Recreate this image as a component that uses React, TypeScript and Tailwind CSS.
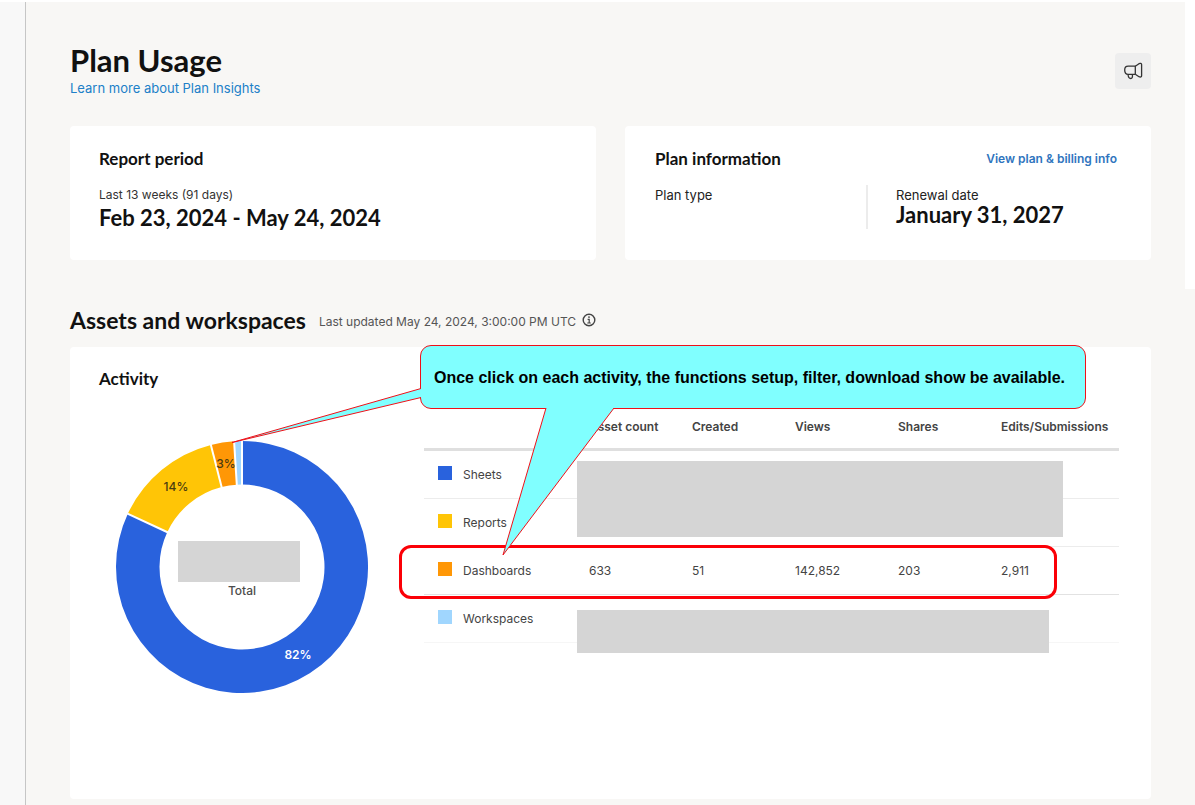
import React from "react";

type Slice = { label: string; color: string; start: number; end: number };

const slices: Slice[] = [
  { label: "Sheets", color: "#2962dd", start: 0, end: 295 },
  { label: "Reports", color: "#ffc506", start: 295, end: 345.7 },
  { label: "Dashboards", color: "#ff9706", start: 345.7, end: 356.4 },
  { label: "Workspaces", color: "#a0d6fe", start: 356.4, end: 360 },
];

const rows = [
  { name: "Sheets", swatch: "bg-[#2962dd]", line: "border-[#ececec]", values: ["", "", "", "", ""] },
  { name: "Reports", swatch: "bg-[#ffc506]", line: "border-[#ececec]", values: ["", "", "", "", ""] },
  { name: "Dashboards", swatch: "bg-[#ff9706]", line: "border-[#e2e2e2]", values: ["633", "51", "142,852", "203", "2,911"] },
  { name: "Workspaces", swatch: "bg-[#a0d6fe]", line: "border-[#f6f6f6]", values: ["", "", "", "", ""] },
];

const columns = ["Asset count", "Created", "Views", "Shares", "Edits/Submissions"];

function point(radius: number, degrees: number) {
  const a = ((degrees - 90) * Math.PI) / 180;
  return `${(126 + radius * Math.cos(a)).toFixed(2)} ${(126 + radius * Math.sin(a)).toFixed(2)}`;
}

function ring({ start, end }: Slice) {
  const large = end - start > 180 ? 1 : 0;
  return `M${point(126, start)}A126 126 0 ${large} 1 ${point(126, end)}L${point(82.5, end)}A82.5 82.5 0 ${large} 0 ${point(82.5, start)}Z`;
}

function Donut() {
  return (
    <div className="relative mt-[41px] ml-[17px] size-[252px] shrink-0">
      <svg viewBox="0 0 252 252" className="size-full" role="img" aria-label="Activity by asset type">
        {slices.map((s) => (
          <path key={s.label} d={ring(s)} fill={s.color} />
        ))}
        {slices.map((s) => (
          <path key={s.label} d={`M${point(81, s.start)}L${point(127, s.start)}`} stroke="#fff" strokeWidth="2" />
        ))}
        <g fontFamily="Inter, sans-serif" fontSize="12" fontWeight="500" textAnchor="middle" fill="#4a3c10">
          <text x="60" y="50">14%</text>
          <text x="110" y="27">3%</text>
          <text x="182" y="218" fill="#fff" fontWeight="600">82%</text>
        </g>
      </svg>
      <div className="absolute top-[100px] left-[62px] flex w-[122px] flex-col items-center">
        <div className="h-[41px] w-full bg-[#d5d5d5]" />
        <span className="pl-[6px] text-xs leading-[18px] font-medium text-[#4c4c4c]">Total</span>
      </div>
    </div>
  );
}

function ActivityTable() {
  return (
    <div className="relative ml-14 mr-8 flex-1">
      <table className="w-full table-fixed border-separate border-spacing-0 text-left text-xs text-[#444]">
        <colgroup>
          <col className="w-[153px]" />
          <col className="w-[103px]" />
          <col className="w-[103px]" />
          <col className="w-[103px]" />
          <col className="w-[103px]" />
          <col />
        </colgroup>
        <thead>
          <tr>
            <td className="border-b-3 border-[#dfdfdf]" />
            {columns.map((c) => (
              <th key={c} scope="col" className="border-b-3 border-[#dfdfdf] pt-[18px] pb-3 pl-3 leading-[18px] font-semibold">
                {c}
              </th>
            ))}
          </tr>
        </thead>
        <tbody>
          {rows.map((r) => (
            <tr key={r.name}>
              <th scope="row" className={`h-12 border-b pl-[14px] font-normal ${r.line}`}>
                <span className="flex items-center gap-[11px]">
                  <span className={`mb-1 size-[14px] ${r.swatch}`} />
                  {r.name}
                </span>
              </th>
              {r.values.map((v, i) => (
                <td key={i} className={`border-b pl-3 ${r.line}`}>
                  {v}
                </td>
              ))}
            </tr>
          ))}
        </tbody>
      </table>
      <div className="absolute top-[61px] left-[153px] h-[76px] w-[486px] bg-[#d5d5d5]" />
      <div className="absolute top-[210px] left-[153px] h-[43px] w-[472px] bg-[#d5d5d5]" />
      <div className="absolute top-[145px] -left-[25px] h-[54px] w-[658px] rounded-xl border-3 border-[#fb0007]" />
    </div>
  );
}

function Callout() {
  return (
    <div className="absolute -top-[2px] left-[350px] h-16 w-[666px]">
      <div className="flex h-full items-center rounded-[11px] border border-[#f01018] bg-[#80ffff] pt-[2px] pl-[13px] text-base font-bold whitespace-nowrap text-black [font-family:'Liberation_Sans',Arial,sans-serif]">
        Once click on each activity, the functions setup, filter, download show be available.
      </div>
      <svg width="400" height="220" viewBox="-190 0 400 220" className="pointer-events-none absolute top-0 -left-[190px]" aria-hidden="true">
        <g fill="#80ffff" stroke="#f01018" strokeWidth="1">
          <path d="M1 43.5L-188 97.5L1 52.5" />
          <path d="M126 63L83 210L194 63" />
        </g>
      </svg>
    </div>
  );
}

function Megaphone() {
  return (
    <svg width="20" height="20" viewBox="0 0 20 20" fill="none" stroke="#333" strokeWidth="1.3" strokeLinejoin="round" aria-hidden="true">
      <path d="M12.3 5.2H5.200C3 5.200 1.700 6.800 1.700 9s1.300 4.300 3.500 4.300h7.100z" />
      <path d="M12.300 5.200L16 2.700c1.400-.7 2.600-.3 2.600.9v11.200c0 1.200-1.200 1.600-2.600.9l-3.700-2.400" />
      <path d="M5 13.500c.3 2.500 1.200 4 2.700 4s2-1.300 1.700-3.900" />
    </svg>
  );
}

function InfoIcon() {
  return (
    <svg width="14" height="14" viewBox="0 0 14 14" fill="none" stroke="#444" aria-hidden="true">
      <circle cx="7" cy="7" r="5.800" strokeWidth="1.400" />
      <path d="M5.600 6.300H7.200V10M5.300 10H8.800" strokeWidth="1.200" />
      <circle cx="7" cy="4.100" r=".9" fill="#444" stroke="none" />
    </svg>
  );
}

const card = "rounded bg-white";
const display = "font-bold text-[#111] [font-family:Lato,sans-serif]";

export default function App() {
  return (
    <div className="relative flex min-h-screen border-t-2 border-white bg-[#f8f7f5] [font-family:Inter,sans-serif]">
      <aside className="w-[26px] shrink-0 border-r border-[#c6c6c6] bg-[#f8f8f8]" />
      <main className="min-w-0 flex-1 px-11 pt-[42px] pb-[6px]">
        <header className="flex items-start justify-between">
          <div>
            <h1 className={`text-[31px] leading-8 ${display}`}>Plan Usage</h1>
            <a href="#insights" className="mt-[2px] block text-[13px] leading-5 text-[#2080c8]">
              Learn more about Plan Insights
            </a>
          </div>
          <button type="button" aria-label="Announcements" className="mt-[9px] flex size-9 items-center justify-center rounded bg-[#eee]">
            <Megaphone />
          </button>
        </header>

        <div className="mt-7 grid grid-cols-2 gap-[29px]">
          <section className={`min-h-[134px] px-[29px] pt-[23px] ${card}`}>
            <h2 className={`text-[17px] leading-5 ${display}`}>Report period</h2>
            <p className="mt-[18px] text-xs leading-4 text-[#333]">Last 13 weeks (91 days)</p>
            <p className={`text-[22px] leading-[30px] ${display}`}>Feb 23, 2024 - May 24, 2024</p>
          </section>
          <section className={`min-h-[134px] pr-[34px] pl-[30px] pt-[23px] ${card}`}>
            <div className="flex items-center justify-between">
              <h2 className={`text-[17px] leading-5 ${display}`}>Plan information</h2>
              <a href="#billing" className="text-xs leading-5 font-semibold text-[#2f75be]">
                View plan &amp; billing info
              </a>
            </div>
            <div className="mt-4 flex h-11">
              <p className="w-[211px] pt-[2px] text-[13px] leading-4 text-[#222]">Plan type</p>
              <div className="border-l-2 border-[#ececec] pl-[28px]">
                <p className="pt-[2px] text-[13px] leading-4 text-[#222]">Renewal date</p>
                <p className={`text-[22px] leading-6 ${display}`}>January 31, 2027</p>
              </div>
            </div>
          </section>
        </div>

        <div className="mt-[46px] flex items-center">
          <h2 className={`text-[23px] leading-7 ${display}`}>Assets and workspaces</h2>
          <span className="ml-[13px] pt-1 text-xs text-[#555]">Last updated May 24, 2024, 3:00:00 PM UTC</span>
          <button type="button" aria-label="About this data" className="ml-[6px]">
            <InfoIcon />
          </button>
        </div>

        <section className={`relative mt-[13px] min-h-[452px] pt-[22px] pl-[29px] ${card}`}>
          <h3 className={`text-[17px] leading-5 ${display}`}>Activity</h3>
          <div className="mt-[11px] flex items-start">
            <Donut />
            <ActivityTable />
          </div>
          <Callout />
        </section>
      </main>
      <div className="absolute top-0 right-0 h-[287px] w-[10px] bg-white" />
    </div>
  );
}
